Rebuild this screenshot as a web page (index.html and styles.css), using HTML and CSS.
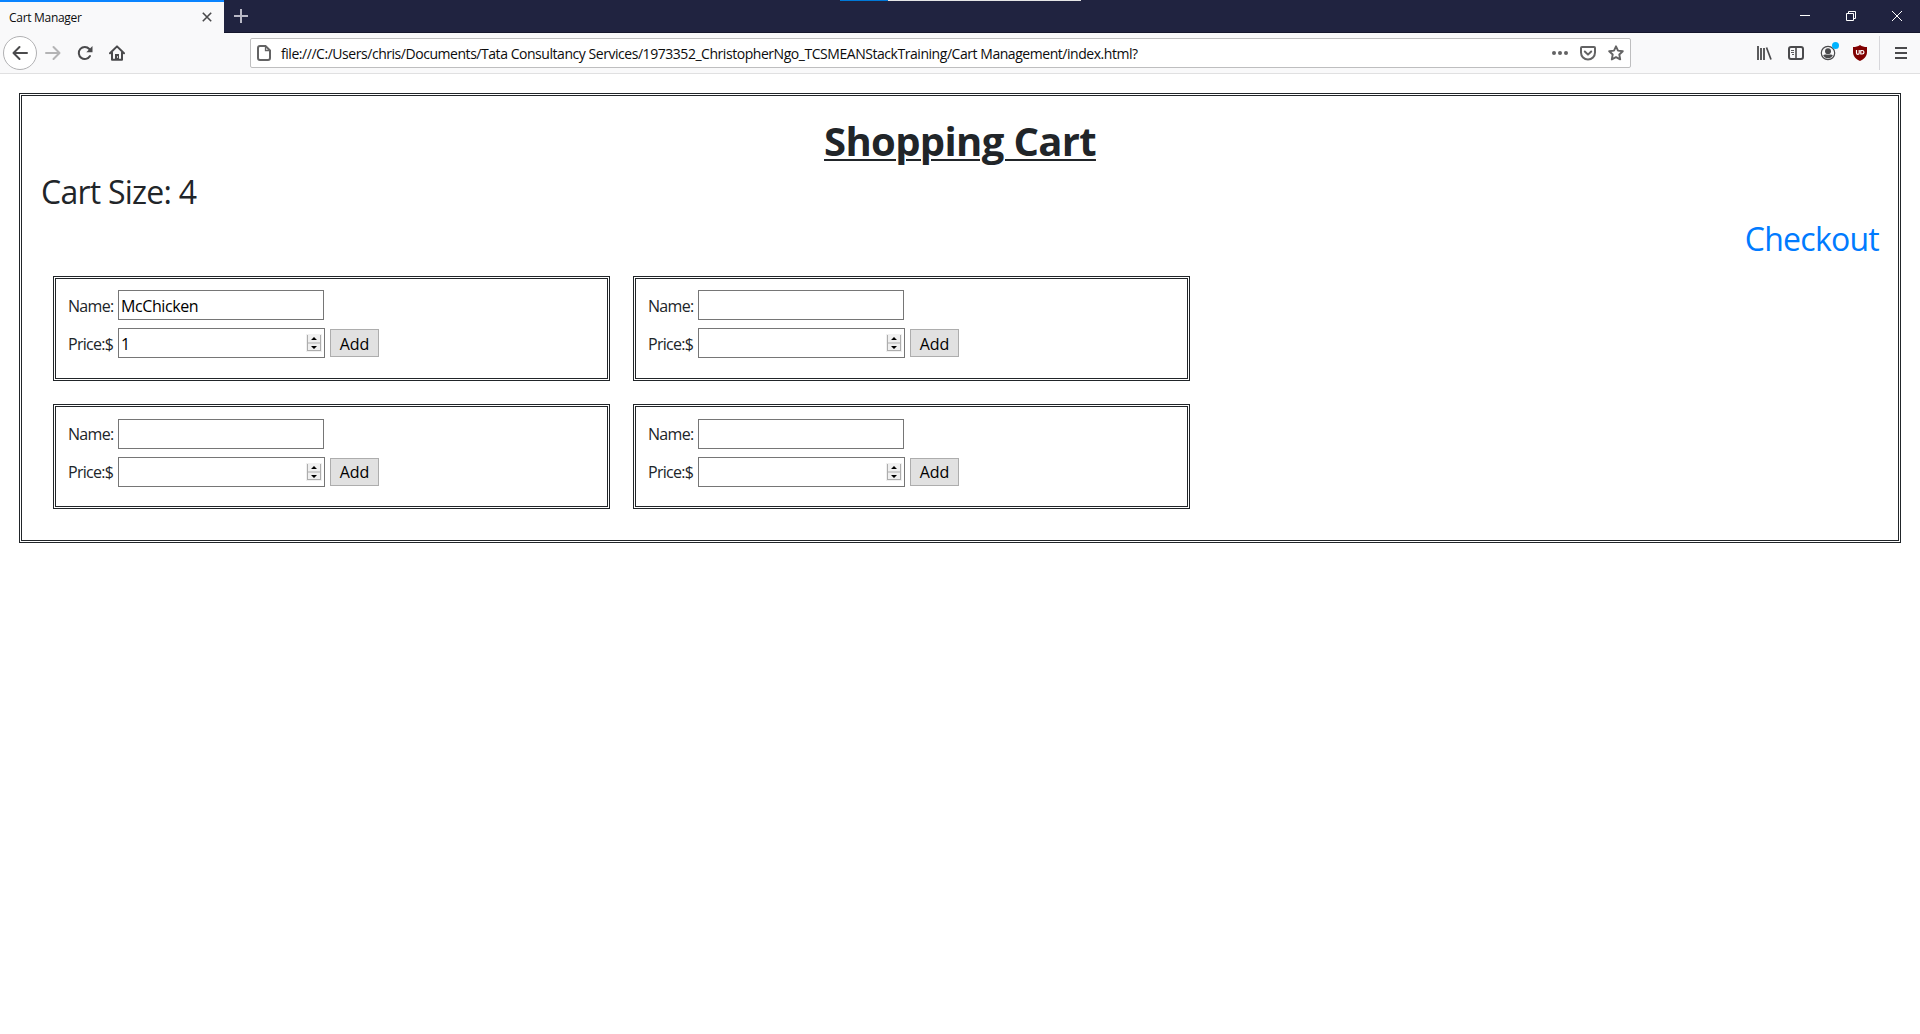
FILE: index.html
```
<!DOCTYPE html>
<html lang="en">
<head>
<meta charset="utf-8">
<title>Cart Manager</title>
<link rel="stylesheet" href="styles.css">
</head>
<body>
<header class="browser">
  <div class="tabstrip">
    <div class="tab">
      <span class="tab-title">Cart Manager</span>
      <svg class="tab-close" width="10" height="10" viewBox="0 0 10 10"><path d="M.8.8l8.4 8.4M9.2.8L.8 9.2" stroke="#4a4a4c" stroke-width="1.6"/></svg>
    </div>
    <svg class="new-tab" width="14" height="14" viewBox="0 0 14 14"><path d="M7 0v14M0 7h14" stroke="#b9b9c6" stroke-width="2"/></svg>
    <div class="load-bar"></div>
    <div class="window-controls">
      <svg width="10" height="10" viewBox="0 0 10 10"><path d="M0 4.500h10" stroke="#fff"/></svg>
      <svg width="10" height="10" viewBox="0 0 10 10"><path d="M.5 2.500h7v7h-7zM2.500 2.500v-2h7v7h-2" fill="none" stroke="#fff"/></svg>
      <svg width="10" height="10" viewBox="0 0 10 10"><path d="M0 0l10 10M10 0L0 10" stroke="#fff"/></svg>
    </div>
  </div>
  <div class="toolbar">
    <div class="back"><svg width="16" height="16" viewBox="0 0 16 16"><path d="M15 8H1.800M7.500 2L1.500 8l6 6" fill="none" stroke="#4a4a4c" stroke-width="2" stroke-linecap="round" stroke-linejoin="round"/></svg></div>
    <svg class="forward" width="16" height="16" viewBox="0 0 16 16"><path d="M1 8h13.200M8.500 2l6 6-6 6" fill="none" stroke="#b4b4b5" stroke-width="2" stroke-linecap="round" stroke-linejoin="round"/></svg>
    <svg class="reload" width="16" height="16" viewBox="0 0 16 16"><path d="M13 11A6 6 0 1 1 12.300 4" fill="none" stroke="#4a4a4c" stroke-width="2" stroke-linecap="round"/><path d="M15.500 1v6.200H9.300z" fill="#4a4a4c"/></svg>
    <svg class="home" width="16" height="16" viewBox="0 0 16 16"><path d="M1 8.300L8 1.400l7 6.900M3 7.500V14.800h10V7.500" fill="none" stroke="#4a4a4c" stroke-width="2" stroke-linecap="round" stroke-linejoin="round"/><path d="M6 15V9h4v6z" fill="#4a4a4c"/><path d="M8.500 11v2" stroke="#ccc"/></svg>
    <div class="urlbar">
      <svg class="page" width="14" height="16" viewBox="0 0 14 16"><path d="M3 1h5.500L13 5.500V13a2 2 0 0 1-2 2H3a2 2 0 0 1-2-2V3a2 2 0 0 1 2-2z" fill="none" stroke="#636364" stroke-width="2"/><path d="M8.500 1v4.500H13" fill="none" stroke="#636364" stroke-width="1.300"/></svg>
      <span class="url">file:///C:/Users/chris/Documents/Tata Consultancy Services/1973352_ChristopherNgo_TCSMEANStackTraining/Cart Management/index.html?</span>
      <svg class="dots" width="16" height="16" viewBox="0 0 16 16"><g fill="#636364"><circle cx="2" cy="8" r="2"/><circle cx="8" cy="8" r="2"/><circle cx="14" cy="8" r="2"/></g></svg>
      <svg class="pocket" width="16" height="16" viewBox="0 0 16 16"><path d="M2 2h12a1 1 0 0 1 1 1v4.500a7 7 0 0 1-14 0V3a1 1 0 0 1 1-1z" fill="none" stroke="#636364" stroke-width="2"/><path d="M4.800 6.500L8 9.600l3.200-3.100" fill="none" stroke="#636364" stroke-width="2" stroke-linecap="round" stroke-linejoin="round"/></svg>
      <svg class="star" width="16" height="16" viewBox="0 0 16 16"><path d="M8 1.300l2 4.300 4.800.6-3.500 3.300.9 4.900L8 12.100l-4.200 2.300.9-4.900L1.200 6.200 6 5.600z" fill="none" stroke="#636364" stroke-width="1.900" stroke-linejoin="round"/></svg>
    </div>
    <div class="tools">
      <svg width="16" height="16" viewBox="0 0 16 16"><path d="M2 1v14M5 3v12M8 3v12" stroke="#4a4a4c" stroke-width="1.800"/><path d="M10.500 2.500L15 14.500" stroke="#4a4a4c" stroke-width="1.700"/></svg>
      <svg width="16" height="16" viewBox="0 0 16 16"><rect x="1" y="2" width="14" height="12" rx="2" fill="none" stroke="#4a4a4c" stroke-width="2"/><path d="M8 2v12" stroke="#4a4a4c" stroke-width="1.600"/><path d="M3 5.500h3M3 7.500h3M4 9.500h2" stroke="#4a4a4c" stroke-width=".9"/></svg>
      <div class="account"><svg width="16" height="16" viewBox="0 0 16 16"><circle cx="8" cy="8" r="6.700" fill="none" stroke="#4a4a4c" stroke-width="1.200"/><circle cx="8" cy="6.200" r="3" fill="#4a4a4c"/><path d="M3.200 10.200C4.500 9 6 9.700 8 9.700s3.500-.7 4.800.5C12 12.200 10 13.300 8 13.300s-4-1.100-4.800-3.100z" fill="#4a4a4c"/></svg><i class="badge"></i></div>
      <svg width="16" height="16" viewBox="0 0 16 16"><path d="M8 0c2 1.500 4.300 2 7 2v5c0 4.500-3 7-7 9-4-2-7-4.500-7-9V2c2.700 0 5-.5 7-2z" fill="#800000"/><path d="M4.500 5v3a1.200 1.200 0 0 0 2.700 0V5M8.800 5.500h1.400a1.700 1.700 0 0 1 0 3.500H8.800z" fill="none" stroke="#fff" stroke-width="1.200"/></svg>
    </div>
    <div class="menu"><svg width="12" height="12" viewBox="0 0 12 12"><path d="M0 1h12M0 6h12M0 11h12" stroke="#4a4a4c" stroke-width="2"/></svg></div>
  </div>
</header>
<main class="cart">
  <h1>Shopping Cart</h1>
  <p class="size">Cart Size: 4</p>
  <p class="checkout"><a>Checkout</a></p>
  <div class="items">
    <form class="item">
      <div class="row"><label>Name:</label><div class="field name"><span>McChicken</span></div></div>
      <div class="row"><label>Price:$</label><div class="field price"><span>1</span><svg class="spin" width="16" height="18" viewBox="0 0 16 18"><g id="spinner"><path d="M0 0h16v18H0z" fill="#f0f0f0"/><path d="M1.500 1v16M14.500 1v16M1 9h14M1 16.500h14" stroke="#adadad"/><path d="M5 6h6L8 3zM5 12h6l-3 3z"/></g></svg></div><button type="button">Add</button></div>
    </form>
    <form class="item">
      <div class="row"><label>Name:</label><div class="field name"></div></div>
      <div class="row"><label>Price:$</label><div class="field price"><svg class="spin" width="16" height="18" viewBox="0 0 16 18"><use href="#spinner"/></svg></div><button type="button">Add</button></div>
    </form>
    <form class="item lower">
      <div class="row"><label>Name:</label><div class="field name"></div></div>
      <div class="row"><label>Price:$</label><div class="field price"><svg class="spin" width="16" height="18" viewBox="0 0 16 18"><use href="#spinner"/></svg></div><button type="button">Add</button></div>
    </form>
    <form class="item lower">
      <div class="row"><label>Name:</label><div class="field name"></div></div>
      <div class="row"><label>Price:$</label><div class="field price"><svg class="spin" width="16" height="18" viewBox="0 0 16 18"><use href="#spinner"/></svg></div><button type="button">Add</button></div>
    </form>
  </div>
</main>
</body>
</html>
```
FILE: styles.css
```
* { box-sizing: border-box; }
body { margin: 0; background: #fff; color: #212529; font: 16px/24px "Open Sans", "Noto Sans", sans-serif; }
svg { display: block; flex: none; }

.browser { height: 74px; background: #f9f9fa; border-bottom: 1px solid #e0e0e1; }
.tabstrip { display: flex; height: 33px; background: #202340; border-bottom: 1px solid #14162c; position: relative; }
.tab { display: flex; align-items: center; justify-content: space-between; width: 224px; height: 33px; padding: 0 12px 0 9px; background: #f9f9fa; border-top: 2px solid #0a84ff; color: #0c0c0d; font-size: 12px; }
.tab-title { letter-spacing: -0.3px; }
.tab-close { margin-bottom: 1px; }
.new-tab { margin: 9px 0 0 10px; }
.load-bar { position: absolute; left: 840px; top: 0; width: 241px; height: 1px; background: linear-gradient(to right, #0078d7 48px, #e6e6e6 48px); }
.window-controls { display: flex; gap: 36px; margin: 11px 18px 0 auto; }

.toolbar { display: flex; align-items: center; height: 40px; }
.back { display: flex; align-items: center; justify-content: center; width: 34px; height: 34px; margin-left: 3px; border: 1px solid #b1b1b3; border-radius: 50%; background: #fff; }
.forward { margin-left: 8px; }
.reload { margin-left: 16px; }
.home { margin-left: 16px; }
.urlbar { display: flex; align-items: center; width: 1381px; height: 30px; margin-left: 125px; padding: 0 6px; border: 1px solid #bebebf; border-radius: 2px; background: #fff; color: #0c0c0d; font-size: 14px; }
.url { margin-left: 10px; padding-top: 2px; white-space: nowrap; letter-spacing: -0.455px; }
.dots { margin-left: auto; }
.pocket, .star { margin-left: 12px; }
.tools { display: flex; gap: 16px; margin-left: 125px; }
.account { position: relative; }
.badge { position: absolute; left: 12px; top: -3px; width: 7px; height: 7px; border-radius: 50%; background: #00b3ff; }
.menu { display: flex; align-items: center; height: 34px; margin-left: 11px; padding-left: 15px; border-left: 1px solid #d7d7db; }

.cart { height: 450px; margin: 19px; padding: 21px 19px 0; border: 3px double #212529; }
h1 { margin: 0 0 8px; font-size: 40px; line-height: 48px; font-weight: 700; letter-spacing: -0.65px; text-align: center; text-decoration: underline 2px; text-underline-offset: 3px; }
.size, .checkout { margin: 0; font-size: 32px; line-height: 38px; letter-spacing: -0.75px; }
.checkout { margin-top: 9px; text-align: right; color: #007bff; }
.items { display: grid; grid-template-columns: 557px 557px; grid-auto-rows: 105px; gap: 23px; margin: 18px 0 0 12px; }
.item { padding: 11px 12px 0; border: 3px double #212529; }
.lower { padding-top: 12px; }
.row { display: flex; height: 38px; }
label { width: 50px; padding-top: 4px; white-space: nowrap; letter-spacing: -0.7px; }
.lower label { padding-top: 3px; }
.field { display: flex; justify-content: space-between; height: 30px; padding: 3px 2px 0; border: 1px solid #767676; background: #fff; color: #000; letter-spacing: -0.4px; }
.name { width: 206px; }
.price { width: 207px; }
.spin { margin: 2px 0 0 auto; }
button { height: 28px; width: 49px; margin: 1px 0 0 5px; padding: 2px 0 0; border: 1px solid #adadad; background: #e1e1e1; font: inherit; color: #000; }
.lower button { padding-top: 0; }
```
